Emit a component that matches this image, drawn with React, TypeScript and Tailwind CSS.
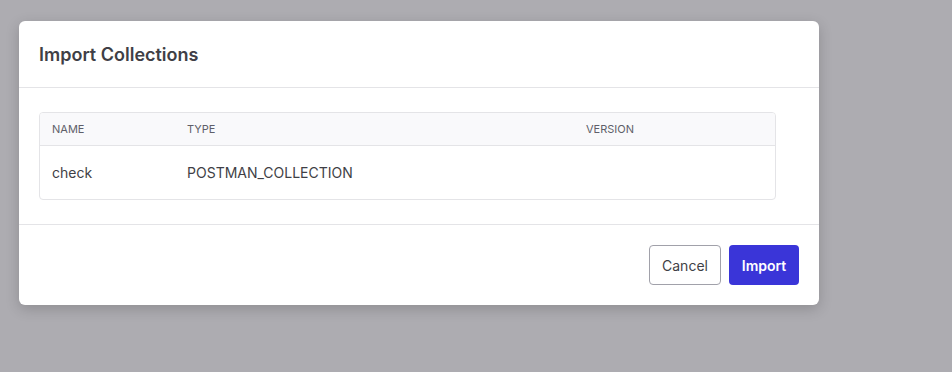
import React from 'react';

const App = () => {
  const rows = [{ name: 'check', type: 'POSTMAN_COLLECTION', version: '' }];

  return (
    <div className="w-[952px] h-[372px] bg-[#adacb1] pt-[21px] pl-[19px] font-['Inter',sans-serif]">
      <div className="w-[800px] bg-white rounded-md shadow-[0_4px_14px_rgba(0,0,0,0.18)]">
        <div className="h-[67px] flex items-center px-5 border-b border-[#e4e4e7]">
          <h2 className="text-[18px] font-semibold text-[#3f3f46]">Import Collections</h2>
        </div>

        <div className="pt-6 pb-6 pl-5 pr-[43px] border-b border-[#e4e4e7]">
          <div className="border border-[#e4e4e7] rounded-[4px] overflow-hidden">
            <div className="grid grid-cols-[135px_399px_1fr] h-[33px] items-center bg-[#f9f9fb] border-b border-[#e4e4e7] px-3 text-[11px] text-[#5f5f69] uppercase">
              <div>Name</div>
              <div>Type</div>
              <div>Version</div>
            </div>
            {rows.map((row, i) => (
              <div
                key={i}
                className="grid grid-cols-[135px_399px_1fr] h-[53px] items-center px-3 text-[14px] text-[#3f3f46]"
              >
                <div>{row.name}</div>
                <div>{row.type}</div>
                <div>{row.version}</div>
              </div>
            ))}
          </div>
        </div>

        <div className="h-[80px] flex items-center justify-end gap-2 px-5">
          <button className="h-10 w-[72px] rounded-[4px] border border-[#a1a1aa] bg-white text-[14px] text-[#3f3f46]">
            Cancel
          </button>
          <button className="h-10 w-[70px] rounded-[4px] bg-[#3a35d8] text-[14px] font-semibold text-white">
            Import
          </button>
        </div>
      </div>
    </div>
  );
};

export default App;
